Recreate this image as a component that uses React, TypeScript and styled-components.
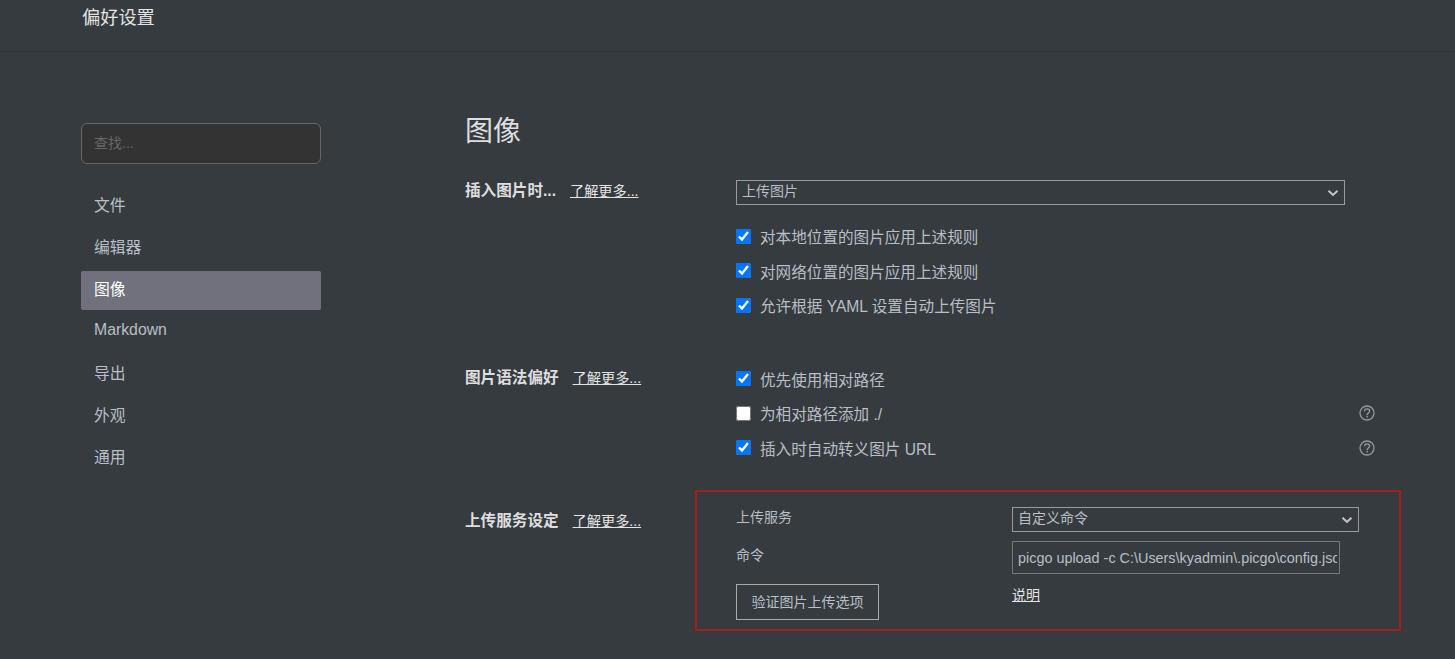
import React from "react";
import styled, { createGlobalStyle } from "styled-components";

const Global = createGlobalStyle`
  html, body { margin: 0; padding: 0; height: 100%; background: #363b40; overflow: hidden; }
  body { font-family: "Liberation Sans", "Noto Sans CJK SC", sans-serif; color: #b8bfc6; }
  * { box-sizing: border-box; }
`;

const Page = styled.div`
  width: 1455px;
  height: 659px;
  overflow: hidden;
  background: #363b40;
`;
const Header = styled.header`
  height: 52px;
  padding: 7px 0 0 82px;
  border-bottom: 1px solid #30353a;
`;
const AppTitle = styled.div`
  font-size: 18.2px;
  line-height: 22px;
  color: #e4e4e4;
`;
const Body = styled.div`
  display: flex;
  padding-left: 81px;
`;
const Sidebar = styled.aside`
  width: 240px;
  flex: none;
  padding-top: 71px;
`;
const Search = styled.input`
  display: block;
  width: 240px;
  height: 41px;
  margin-bottom: 23px;
  padding: 0 12px 2px;
  background: #333;
  border: 1px solid #666;
  border-radius: 6px;
  font: 14px "Liberation Sans", "Noto Sans CJK SC", sans-serif;
  color: #ccc;
  outline: none;
  &::placeholder { color: #666; opacity: 1; }
`;
const Nav = styled.nav`
  display: flex;
  flex-direction: column;
  gap: 3px;
`;
const NavItem = styled.div<{ $active?: boolean }>`
  height: 39px;
  padding: 0 13px 5px;
  display: flex;
  align-items: center;
  font-size: 15.8px;
  border-radius: 2px;
  color: ${(p) => (p.$active ? "#fff" : "#b8bfc6")};
  background: ${(p) => (p.$active ? "#70717c" : "transparent")};
`;
const Main = styled.main`
  margin-left: 144px;
  padding-top: 65px;
  flex: 1;
`;
const Heading = styled.h1`
  margin: 0 0 33px;
  font-size: 28px;
  line-height: 30px;
  font-weight: 400;
  color: #dedede;
`;
const Section = styled.section<{ $left: number; $gap: number }>`
  display: flex;
  margin-bottom: ${(p) => p.$gap}px;
  & > :first-child { width: ${(p) => p.$left}px; flex: none; }
`;
const Label = styled.div<{ $top: number }>`
  padding-top: ${(p) => p.$top}px;
  font-size: 15.6px;
  line-height: 20px;
  font-weight: 700;
  color: #dedede;
  white-space: nowrap;
`;
const LearnMore = styled.a`
  margin-left: 14px;
  font-size: 14.2px;
  font-weight: 400;
  color: #e4e4e4;
  text-decoration: underline;
`;
const Column = styled.div`
  width: 639px;
`;
const SelectBox = styled.div<{ $width: number }>`
  width: ${(p) => p.$width}px;
  height: 25px;
  padding: 0 5px;
  display: flex;
  align-items: center;
  justify-content: space-between;
  border: 1px solid #9a9a9a;
  font-size: 14px;
  color: #b8bfc6;
`;
const SelectValue = styled.span`
  margin-bottom: 5px;
`;
const Checks = styled.div<{ $top: number }>`
  margin-top: ${(p) => p.$top}px;
`;
const CheckRow = styled.div`
  height: 34.5px;
  display: flex;
  align-items: center;
  font-size: 15.6px;
  color: #b8bfc6;
`;
const Box = styled.input`
  width: 15px;
  height: 15px;
  margin: 0 9px 0 0;
  flex: none;
  accent-color: #0075ff;
`;
const CheckText = styled.span`
  flex: 1;
`;
const UploadPanel = styled.div`
  width: 706px;
  height: 141px;
  padding: 15px 39px 0 39px;
  border: 2px solid #a12020;
  display: grid;
  grid-template-columns: 276px 347px;
  grid-template-rows: 25px 34px 36px;
  row-gap: 9px;
  align-items: center;
`;
const FieldName = styled.div`
  font-size: 14px;
  color: #b8bfc6;
  padding-bottom: 8px;
`;
const CommandInput = styled.input`
  align-self: start;
  width: 328px;
  height: 33px;
  padding: 0 2px 0 5px;
  background: transparent;
  border: 1px solid #777;
  font: 14.4px "Liberation Sans", "Noto Sans CJK SC", sans-serif;
  color: #b8bfc6;
  outline: none;
`;
const VerifyButton = styled.button`
  width: 143px;
  height: 36px;
  padding: 0 0 2px;
  background: transparent;
  border: 1px solid #aaa;
  font: 14px "Liberation Sans", "Noto Sans CJK SC", sans-serif;
  color: #b8bfc6;
`;
const DocLink = styled.a`
  align-self: start;
  font-size: 14px;
  color: #e4e4e4;
  text-decoration: underline;
`;

const Chevron = () => (
  <svg width="12" height="8" viewBox="0 0 12 8" fill="none">
    <path d="M1.5 1.8 6 6 10.5 1.8" stroke="#c4c4c4" strokeWidth="2" />
  </svg>
);
const Help = () => (
  <svg width="16" height="16" viewBox="0 0 16 16" fill="none" stroke="#94979b">
    <circle cx="8" cy="8" r="7" strokeWidth="1.3" />
    <path d="M5.5 6.2C5.6 4.6 6.8 3.9 8 3.9c1.5 0 2.6.9 2.6 2.2 0 1.9-2.4 2-2.4 3.7v.5" strokeWidth="1.4" />
    <path d="M8.2 11.1v1.4" strokeWidth="1.5" />
  </svg>
);

const navItems = ["文件", "编辑器", "图像", "Markdown", "导出", "外观", "通用"];

const Check = ({ text, checked = true, help = false }: { text: string; checked?: boolean; help?: boolean }) => (
  <CheckRow>
    <Box type="checkbox" defaultChecked={checked} />
    <CheckText>{text}</CheckText>
    {help && <Help />}
  </CheckRow>
);

export default function App() {
  return (
    <Page>
      <Global />
      <Header>
        <AppTitle>偏好设置</AppTitle>
      </Header>
      <Body>
        <Sidebar>
          <Search placeholder="查找..." />
          <Nav>
            {navItems.map((n) => (
              <NavItem key={n} $active={n === "图像"}>{n}</NavItem>
            ))}
          </Nav>
        </Sidebar>
        <Main>
          <Heading>图像</Heading>
          <Section $left={271} $gap={39}>
            <Label $top={1}>插入图片时...<LearnMore>了解更多...</LearnMore></Label>
            <Column>
              <SelectBox $width={609}><SelectValue>上传图片</SelectValue><Chevron /></SelectBox>
              <Checks $top={14}>
                <Check text="对本地位置的图片应用上述规则" />
                <Check text="对网络位置的图片应用上述规则" />
                <Check text="允许根据 YAML 设置自动上传图片" />
              </Checks>
            </Column>
          </Section>
          <Section $left={271} $gap={25}>
            <Label $top={6}>图片语法偏好<LearnMore>了解更多...</LearnMore></Label>
            <Column>
              <Checks $top={0}>
                <Check text="优先使用相对路径" />
                <Check text="为相对路径添加 ./" checked={false} help />
                <Check text="插入时自动转义图片 URL" help />
              </Checks>
            </Column>
          </Section>
          <Section $left={230} $gap={0}>
            <Label $top={21}>上传服务设定<LearnMore>了解更多...</LearnMore></Label>
            <UploadPanel>
              <FieldName>上传服务</FieldName>
              <SelectBox $width={347}><SelectValue>自定义命令</SelectValue><Chevron /></SelectBox>
              <FieldName>命令</FieldName>
              <CommandInput readOnly value="picgo upload -c C:\Users\kyadmin\.picgo\config.json" />
              <VerifyButton>验证图片上传选项</VerifyButton>
              <DocLink>说明</DocLink>
            </UploadPanel>
          </Section>
        </Main>
      </Body>
    </Page>
  );
}
